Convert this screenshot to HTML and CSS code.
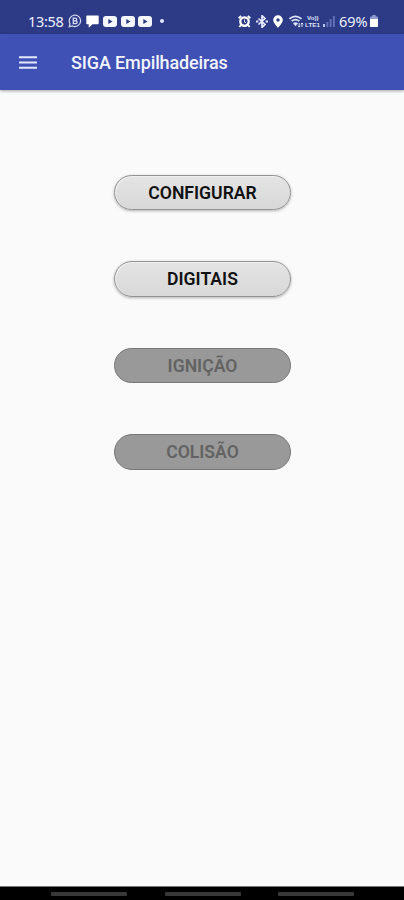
FILE: index.html
```html
<!DOCTYPE html>
<html lang="pt-BR">
<head>
<meta charset="utf-8">
<title>SIGA Empilhadeiras</title>
<link rel="stylesheet" href="styles.css">
</head>
<body>
<div class="status">
  <div class="group">
    <span class="clock">13:58</span>
    <svg class="whats" width="14" height="14" viewBox="0 0 14 14"><path d="M1.200 12.800 2 9.700A5.700 5.700 0 1 1 4.500 12z" fill="none" stroke="#d9def5" stroke-width="1.200"/><path d="M5.300 4.200h2a1.300 1.300 0 0 1 0 2.700h-2zM5.300 6.900h2.400a1.400 1.400 0 0 1 0 2.800H5.300z" fill="none" stroke="#d9def5" stroke-width="1.300"/></svg>
    <svg class="bubble" width="13" height="13" viewBox="0 0 13 13"><path d="M1 .5h11a.7.7 0 0 1 .7.7v7.300a.7.7 0 0 1-.7.7H6.500L2.700 12.800V9.200H1a.7.7 0 0 1-.7-.7V1.200A.7.700 0 0 1 1 .5z" fill="#fff"/></svg>
    <svg class="video" width="14" height="11" viewBox="0 0 14 11"><rect width="14" height="11" rx="3" fill="#f5f7ff"/><path d="M5.300 3v5L9.500 5.500z" fill="#2d3b87"/></svg>
    <svg class="video" width="14" height="11" viewBox="0 0 14 11"><rect width="14" height="11" rx="3" fill="#f5f7ff"/><path d="M5.300 3v5L9.500 5.500z" fill="#2d3b87"/></svg>
    <svg class="video" width="14" height="11" viewBox="0 0 14 11"><rect width="14" height="11" rx="3" fill="#f5f7ff"/><path d="M5.300 3v5L9.500 5.500z" fill="#2d3b87"/></svg>
    <span class="dot"></span>
  </div>
  <div class="group">
    <svg width="13" height="13" viewBox="0 0 13 13"><path d="M.7 3.200 3.200.9M12.300 3.200 9.800.9M3 10l-1.700 2M10 10l1.700 2" stroke="#fff" stroke-width="1.900"/><circle cx="6.500" cy="6.600" r="4.200" fill="none" stroke="#fff" stroke-width="2.300"/><path d="M6.500 4.500v2.600l1.600.7" fill="none" stroke="#fff" stroke-width=".8"/></svg>
    <svg class="bt" width="12" height="13" viewBox="0 0 12 13"><path d="m2.500 3.500 6.500 6-3 2.800V.7l3 2.800-6.500 6" fill="none" stroke="#e9edff" stroke-width="1.700"/><path d="M0 5.600h2.400v1.800H0zM9.600 5.600H12v1.800H9.600z" fill="#dfe4fa"/></svg>
    <svg class="pin" width="10" height="13" viewBox="0 0 10 13"><path fill-rule="evenodd" d="M5 .3a4.800 4.800 0 0 1 4.800 4.800C9.800 8 5 12.800 5 12.800S.2 8 .2 5.100A4.800 4.800 0 0 1 5 .3zM5 3.300a1.700 1.700 0 1 0 0 3.400 1.700 1.700 0 0 0 0-3.400z" fill="#fff"/></svg>
    <svg class="wifi" width="15" height="13" viewBox="0 0 15 13"><path d="M.5 3.800q6-4.800 12 0M2.600 6.200q3.900-3 7.800 0" fill="none" stroke="#dfe4fa" stroke-width="1.700"/><path d="M4 8.200q2.500-2 5 0L6.500 11.200z" fill="#dfe4fa"/><path d="M10.200 8v4M9 10.800l1.200 1.300 1.200-1.300M13 12V8M11.800 9.200 13 8l1.200 1.200" fill="none" stroke="#dfe4fa"/></svg>
    <svg class="volte" width="16" height="14" viewBox="0 0 16 14"><g class="volte-text"><text x="2" y="5.500" textLength="11.500" lengthAdjust="spacingAndGlyphs">Vo))</text><text x="0" y="12.700" textLength="15" lengthAdjust="spacingAndGlyphs">LTE1</text></g></svg>
    <svg class="signal" width="12" height="12" viewBox="0 0 12 12"><path d="M0 9h2v3H0z" fill="#bac4ed"/><path d="M3.300 7h2v5h-2zM6.600 4h2v8h-2zM9.900 1h2v11h-2z" fill="#6170b5"/></svg>
    <span class="percent">69%</span>
    <svg class="battery" width="8" height="12" viewBox="0 0 8 12"><path d="M2.300 0h3.400v1.500H7a1 1 0 0 1 1 1V11a1 1 0 0 1-1 1H1a1 1 0 0 1-1-1V2.500a1 1 0 0 1 1-1h1.300z" fill="#8f9ace"/><path d="M0 4h8v7a1 1 0 0 1-1 1H1a1 1 0 0 1-1-1z" fill="#fff"/></svg>
  </div>
</div>
<header class="appbar">
  <svg class="menu" width="18" height="13" viewBox="0 0 18 13"><path d="M0 1.200h18M0 6.500h18M0 11.800h18" stroke="#e3e7fa" stroke-width="2.100"/></svg>
  <h1>SIGA Empilhadeiras</h1>
</header>
<main>
  <button class="action">CONFIGURAR</button>
  <button class="action">DIGITAIS</button>
  <button class="action" disabled>IGNIÇÃO</button>
  <button class="action" disabled>COLISÃO</button>
</main>
<footer class="navbar"><i></i><i></i><i></i></footer>
</body>
</html>
```
FILE: styles.css
```css
* { box-sizing: border-box; }
body {
  margin: 0;
  height: 900px;
  display: flex;
  flex-direction: column;
  background: #fafafa;
  font-family: Roboto, sans-serif;
  overflow: hidden;
}
.status {
  height: 34px;
  padding: 8px 26px 0 28px;
  display: flex;
  justify-content: space-between;
  background: #2d3b87;
  color: #eef1ff;
  font-family: "Noto Sans", sans-serif;
}
.group { display: flex; align-items: center; height: 26px; }
.group svg { flex: none; }
.clock { font-size: 14.5px; letter-spacing: -.3px; width: 36px; white-space: nowrap; }
.whats { margin-left: 4px; }
.bubble { margin-left: 4px; }
.video { margin-left: 3.7px; }
.bubble + .video { margin-left: 4px; }
.dot { width: 4px; height: 4px; border-radius: 50%; background: #e3e8ff; margin-left: 8px; }
.bt { margin-left: 5px; }
.pin { margin-left: 5px; }
.wifi { margin-left: 6px; }
.volte { margin-left: 1px; }
.volte-text { font: 700 6px "Liberation Sans", sans-serif; fill: #dfe4fa; }
.signal { margin-left: 2px; }
.percent { width: 30px; margin-left: 4px; font-size: 14.5px; white-space: nowrap; }
.battery { margin-left: 1px; }
.appbar {
  height: 56px;
  padding-left: 19px;
  display: flex;
  align-items: center;
  background: #3f51b5;
  color: #f2f4ff;
  box-shadow: 0 1px 3px rgba(0, 0, 0, .35);
}
.menu { flex: none; }
h1 { margin: 0 0 0 34px; font-size: 18px; font-weight: 500; letter-spacing: -.12px; white-space: nowrap; }
main {
  flex: 1;
  display: flex;
  flex-direction: column;
  align-items: center;
  gap: 51px;
  padding: 84.5px 0 0 1px;
}
.action {
  width: 177px;
  height: 35.5px;
  padding: 1px 0 0;
  border: 1px solid #929292;
  border-radius: 18px;
  background: linear-gradient(#e4e4e4, #d8d8d8);
  box-shadow: inset 1px 1px 1px #f0f0f0, 0 1px 3px rgba(0, 0, 0, .3);
  color: #111;
  font: 600 17.6px Roboto, sans-serif;
}
.action:disabled {
  border-color: #777;
  background: #999;
  box-shadow: none;
  color: #636363;
}
.navbar {
  height: 14px;
  padding: 1px 50px 0 51px;
  border-top: 1px solid #777;
  background: #000;
  display: flex;
  justify-content: space-between;
  align-items: center;
  margin-top: auto;
}
.navbar i { width: 76px; height: 4px; border-radius: 1px; background: #383838; }
```
